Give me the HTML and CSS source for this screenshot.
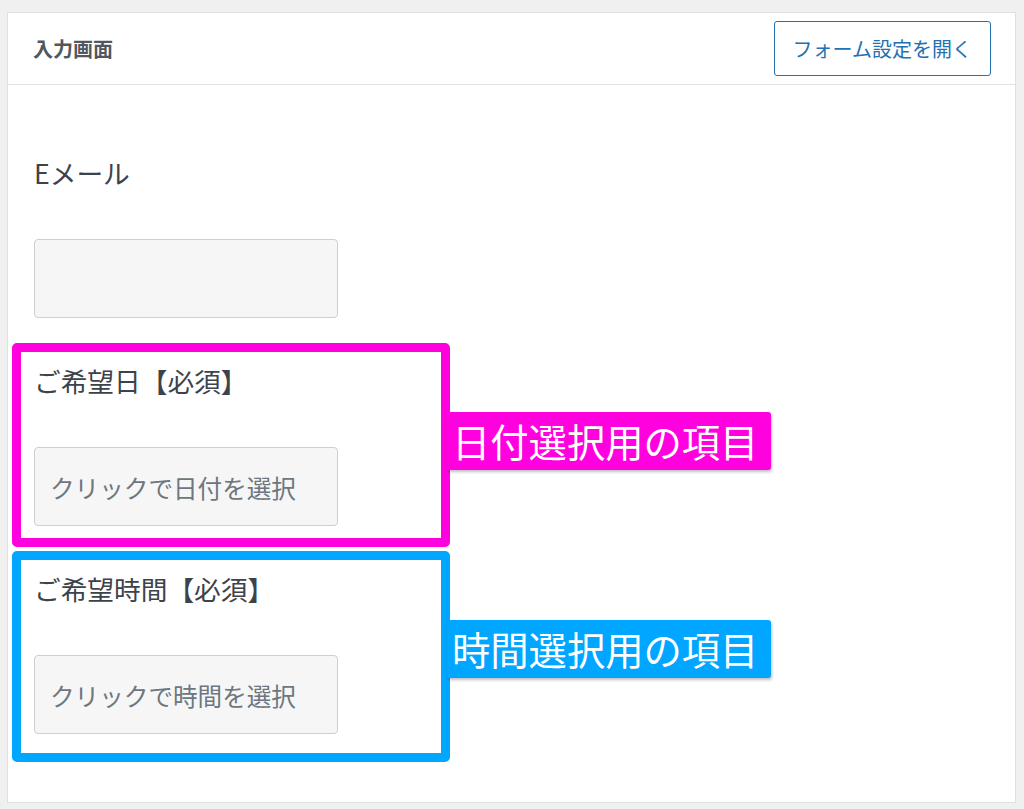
FILE: index.html
```html
<!DOCTYPE html>
<html lang="ja">
<head>
  <meta charset="UTF-8">
  <meta name="viewport" content="width=device-width, initial-scale=1.0">
  <title>入力画面</title>
  <link rel="stylesheet" href="styles.css">
</head>
<body>
  <div class="panel">
    <div class="panel-header">
      <h2>入力画面</h2>
      <button type="button" class="open-settings">フォーム設定を開く</button>
    </div>

    <div class="panel-body">
      <div class="field">
        <label for="email">Eメール</label>
        <input type="text" id="email">
      </div>

      <div class="field field-date">
        <label for="date">ご希望日【必須】</label>
        <input type="text" id="date" placeholder="クリックで日付を選択" readonly>
        <span class="note">日付選択用の項目</span>
      </div>

      <div class="field field-time">
        <label for="time">ご希望時間【必須】</label>
        <input type="text" id="time" placeholder="クリックで時間を選択" readonly>
        <span class="note">時間選択用の項目</span>
      </div>
    </div>
  </div>
</body>
</html>
```

FILE: styles.css
```css
body {
  font-family: "Noto Sans CJK JP", "Noto Sans", sans-serif;
  margin: 0;
  padding: 12px 8px 0 7px;
  background-color: #f0f0f0;
  color: #3c434a;
}
.panel {
  background-color: #fff;
  border: 1px solid #e0e0e0;
}
.panel-header {
  display: flex;
  justify-content: space-between;
  align-items: center;
  height: 71px;
  padding: 0 24px 0 25px;
  border-bottom: 1px solid #e2e2e2;
}
.panel-header h2 {
  margin: 0;
  font-size: 20px;
  font-weight: 700;
  color: #50575e;
}
.open-settings {
  height: 55px;
  padding: 0 18px;
  font-family: inherit;
  font-size: 20px;
  color: #2271b1;
  background-color: #fff;
  border: 1px solid #2271b1;
  border-radius: 3px;
  cursor: pointer;
}
.panel-body {
  display: flex;
  flex-direction: column;
  gap: 4px;
  padding: 50px 4px 40px;
}
.field {
  position: relative;
  width: 438px;
  box-sizing: border-box;
  padding: 11px 13px 12px;
  border: 9px solid transparent;
  border-radius: 5px;
}
.field label {
  display: block;
  font-size: 26.7px;
  line-height: 36px;
  margin-bottom: 48px;
}
.field input {
  display: block;
  width: 304px;
  height: 79px;
  box-sizing: border-box;
  padding: 0 15px;
  font-family: inherit;
  font-size: 24.6px;
  background-color: #f6f6f6;
  border: 1px solid #cfcfcf;
  border-radius: 4px;
  outline: none;
}
.field input::placeholder {
  color: #6c7781;
}
.field-date {
  border-color: #ff00de;
}
.field-time {
  border-color: #00a6ff;
  padding-bottom: 19px;
}
.note {
  position: absolute;
  left: 426px;
  top: 60px;
  width: 324px;
  height: 58px;
  box-sizing: border-box;
  padding: 0 5px;
  font-size: 38.3px;
  line-height: 58px;
  color: #fff;
  white-space: nowrap;
  border-radius: 3px;
  box-shadow: 1px 2px 3px rgba(0, 0, 0, 0.25);
}
.field-date .note {
  background-color: #ff00de;
}
.field-time .note {
  background-color: #00a6ff;
}
```
